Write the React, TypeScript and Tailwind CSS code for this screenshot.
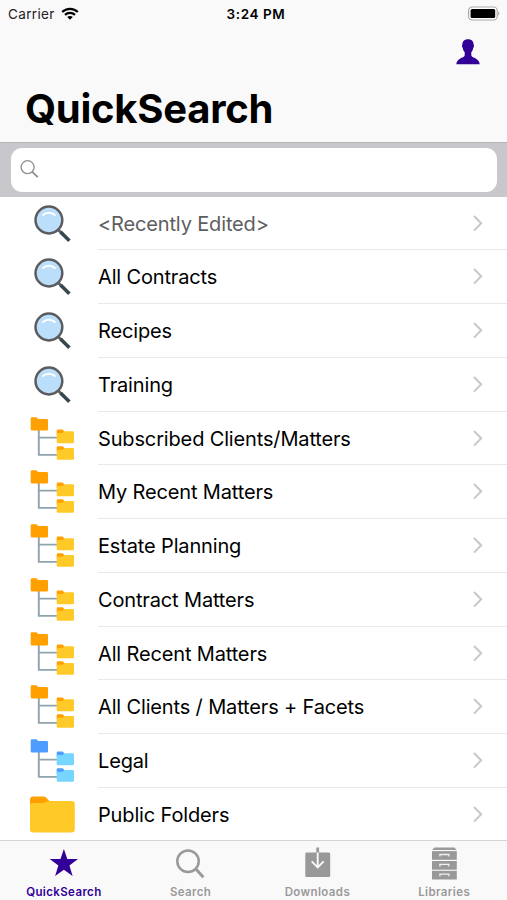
import { useState } from "react";
import type { ReactNode } from "react";
import clsx from "clsx";

type Kind = "search" | "tree" | "treeBlue" | "folder"

const items: { label: string; kind: Kind; muted?: boolean }[] = [
    { label: "<Recently Edited>", kind: "search", muted: true },
    { label: "All Contracts", kind: "search" },
    { label: "Recipes", kind: "search" },
    { label: "Training", kind: "search" },
    { label: "Subscribed Clients/Matters", kind: "tree" },
    { label: "My Recent Matters", kind: "tree" },
    { label: "Estate Planning", kind: "tree" },
    { label: "Contract Matters", kind: "tree" },
    { label: "All Recent Matters", kind: "tree" },
    { label: "All Clients / Matters + Facets", kind: "tree" },
    { label: "Legal", kind: "treeBlue" },
    { label: "Public Folders", kind: "folder" },
]

const MagnifierIcon = () => (
    <svg width="50" height="54" viewBox="0 0 50 54" className="shrink-0">
        <path d="M29.5 32L34 36.5" stroke="#616161" strokeWidth="2.8" />
        <path d="M32.6 35L41.4 43.8" stroke="#37474f" strokeWidth="3.6" />
        <circle cx="20.9" cy="23" r="13.4" fill="#bbdefb" stroke="#5c5c5e" strokeWidth="2.5" />
        <path d="M15 18C18 15 23.8 15 26.8 18" fill="none" stroke="#fff" strokeWidth="1.9" strokeLinecap="round" />
    </svg>
)

const TreeIcon = ({ blue }: { blue?: boolean }) => {
    const root = blue ? "#4d9dff" : "#ffa000"
    const leaf = blue ? "#76d6ff" : "#ffca28"
    return (
        <svg width="50" height="54" viewBox="0 0 50 54" className="shrink-0">
            <path d="M10.8 18V42.9H29M10.8 25.6H29" fill="none" stroke="#90a4ae" strokeWidth="1.9" />
            <path d="M2.7 6.5Q2.7 5.2 4 5.2H8.4L10.2 7.1H18.8Q20 7.1 20 8.3V17.3Q20 18.5 18.8 18.5H4Q2.7 18.5 2.7 17.3Z" fill={root} />
            {[0, 16.6].map((y) => (
                <g key={y} transform={`translate(0 ${y})`}>
                    <path d="M28.7 18.8Q28.7 17.6 29.9 17.6H34.6L36.4 19.4V23H28.7Z" fill={root} />
                    <path d="M28.7 21.1H34.6L36.4 19.3H44.8Q46 19.3 46 20.5V30Q46 31.2 44.8 31.2H29.9Q28.7 31.2 28.7 30Z" fill={leaf} />
                </g>
            ))}
        </svg>
    )
}

const FolderIcon = () => (
    <svg width="50" height="54" viewBox="0 0 50 54" className="shrink-0">
        <path d="M2 11.5Q2 8.6 5 8.6H15.5Q17 8.6 18 9.6L22 13.5V22H2Z" fill="#ffa000" />
        <path d="M2 17.6Q2 15 4.5 15H14.6Q16 15 17 14.6L19 13.4Q20 12.9 21.5 12.9H43.5Q46.8 12.9 46.8 16.2V41.3Q46.8 44.5 43.5 44.5H5.3Q2 44.5 2 41.3Z" fill="#ffca28" />
    </svg>
)

const RowIcon = ({ kind }: { kind: Kind }) => {
    if (kind === "search") return <MagnifierIcon />
    if (kind === "folder") return <FolderIcon />
    return <TreeIcon blue={kind === "treeBlue"} />
}

const Tab = ({ label, active, onClick, children }: { label: string; active: boolean; onClick: () => void; children: ReactNode }) => (
    <button
        type="button"
        onClick={onClick}
        className={clsx("flex flex-1 flex-col items-center", active ? "text-[#310096]" : "text-[#999]")}
    >
        <svg width="40" height="42" viewBox="0 0 40 42" fill="currentColor" className="shrink-0">{children}</svg>
        <span className="pt-[2px] pl-px text-[11.5px] leading-[15px] font-semibold tracking-[0.38px]">{label}</span>
    </button>
)

export default function App() {
    const [tab, setTab] = useState("QuickSearch")
    const [query, setQuery] = useState("")

    return <main className="flex h-[900px] w-[507px] flex-col overflow-hidden bg-white font-['Inter',sans-serif] text-black">
        <header className="flex h-[143px] shrink-0 flex-col border-b border-[#b6b6b9] bg-[#f9f9f9]">
            <div className="grid h-[28px] grid-cols-3 items-center pr-[7px] pl-[8px]">
                <div className="flex items-center gap-[6px]">
                    <span className="text-[13.5px] tracking-[0.35px] text-[#222]">Carrier</span>
                    <svg width="18" height="14" viewBox="0 0 18 14" fill="none" stroke="#000" strokeWidth="2.2">
                        <path d="M1.2 5C5.5 .7 12.5 .7 16.8 5" />
                        <path d="M4 7.9C6.8 5.2 11.2 5.2 14 7.9" />
                        <path d="M6.2 10C7.8 8.6 10.2 8.6 11.8 10L9 12.7Z" fill="#000" stroke="none" />
                    </svg>
                </div>
                <span className="pl-[4px] text-center text-[13.5px] font-semibold tracking-[0.6px]">3:24 PM</span>
                <svg width="33" height="16" viewBox="0 0 33 16" className="justify-self-end">
                    <rect x="1.6" y="1" width="28.6" height="13" rx="3.6" fill="#fff" stroke="#aaa" strokeWidth="1.2" />
                    <rect x="3.6" y="3" width="24.6" height="9" rx="1.6" fill="#000" />
                    <path d="M31.3 5.5C32.6 5.9 32.6 9.1 31.3 9.5Z" fill="#999" />
                </svg>
            </div>
            <div className="flex h-[50px] justify-end pt-[10px] pr-[27px]">
                <button type="button" title="Account" className="h-[28px]">
                    <svg width="24" height="28" viewBox="0 0 24 28" fill="#310096">
                        <path d="M12 1.2C15.6 1.2 17.8 3.3 17.6 6.6C18.3 7.1 18 9.4 17.2 9.9C16.9 12 16.2 13.2 15.3 14.1V17.6C16.4 20.2 23.2 20.4 23.7 26.2H.3C.8 20.4 7.6 20.2 8.7 17.6V14.1C7.8 13.2 7.1 12 6.8 9.9C6 9.4 5.7 7.1 6.4 6.6C6.2 3.3 8.4 1.2 12 1.2Z" />
                    </svg>
                </button>
            </div>
            <h1 className="pl-[25px] text-[40px] leading-[62px] font-bold tracking-[-0.25px]">QuickSearch</h1>
        </header>
        <div className="h-[53.5px] shrink-0 bg-[#c8c7cc] px-[10.5px] pt-[4.5px]">
            <label className="flex h-[44px] items-center rounded-[11px] bg-white pl-[9px]">
                <svg width="20" height="20" viewBox="0 0 20 20" fill="none" stroke="#8e8e93" strokeWidth="1.3" className="shrink-0">
                    <circle cx="7.6" cy="7.2" r="6.5" />
                    <path d="M12.2 11.8L17.8 17.2" strokeWidth="1.8" />
                </svg>
                <input value={query} onChange={(e) => setQuery(e.target.value)} className="w-full px-2 outline-none" />
            </label>
        </div>
        <ul className="min-h-0 flex-1 overflow-hidden">
            {items.map((item) => (
                <li key={item.label} className="flex h-[53.75px] pl-[28px]">
                    <RowIcon kind={item.kind} />
                    <div className="ml-[20px] flex flex-1 items-center justify-between border-b border-[#e9e9eb] pt-[1.5px] pr-[23px]">
                        <span className={clsx("text-[20px] leading-[26px] tracking-[-0.15px] whitespace-nowrap", item.muted && "text-[#5e5e5e]")}>{item.label}</span>
                        <svg width="12" height="18" viewBox="0 0 12 18" fill="none" stroke="#c7c7cc" strokeWidth="2">
                            <path d="M2 1L9.2 8.3L2 15.6" />
                        </svg>
                    </div>
                </li>
            ))}
        </ul>
        <nav className="flex h-[60px] shrink-0 border-t border-[#d4d4d6] bg-[#f9f9f9]">
            <Tab label="QuickSearch" active={tab === "QuickSearch"} onClick={() => setTab("QuickSearch")}>
                <path d="M20.9 8L24.3 17.9L35 18L26.4 24.5L29.6 35L20.9 28.7L12.1 35L15.4 24.5L6.7 18L17.5 17.9Z" />
            </Tab>
            <Tab label="Search" active={tab === "Search"} onClick={() => setTab("Search")}>
                <circle cx="18" cy="20.2" r="10.7" fill="none" stroke="currentColor" strokeWidth="2.5" />
                <path d="M25.6 27.8L33.4 36.2" stroke="currentColor" strokeWidth="3" />
            </Tab>
            <Tab label="Downloads" active={tab === "Downloads"} onClick={() => setTab("Downloads")}>
                <path d="M9.5 11.5H19.3V6.4H22.1V11.5H32Q33.2 11.5 33.2 12.7V34.8Q33.2 36 32 36H9.5Q8.3 36 8.3 34.8V12.7Q8.3 11.5 9.5 11.5Z" />
                <path d="M20.7 11.5V26M14.7 20.3L20.7 26.3L26.7 20.3" fill="none" stroke="#f9f9f9" strokeWidth="1.9" />
            </Tab>
            <Tab label="Libraries" active={tab === "Libraries"} onClick={() => setTab("Libraries")}>
                <path d="M10.5 6.4H30.3L32.8 8.9H8Z" />
                {[10.1, 20, 29.8].map((y) => (
                    <g key={y} transform={`translate(0 ${y})`}>
                        <path d="M8 0H32.8V8.7H8Z" />
                        <path d="M15.9 5.4V3.4H24.9V5.4" fill="none" stroke="#f0f0f0" strokeWidth="1.3" />
                    </g>
                ))}
            </Tab>
        </nav>
    </main>
}
